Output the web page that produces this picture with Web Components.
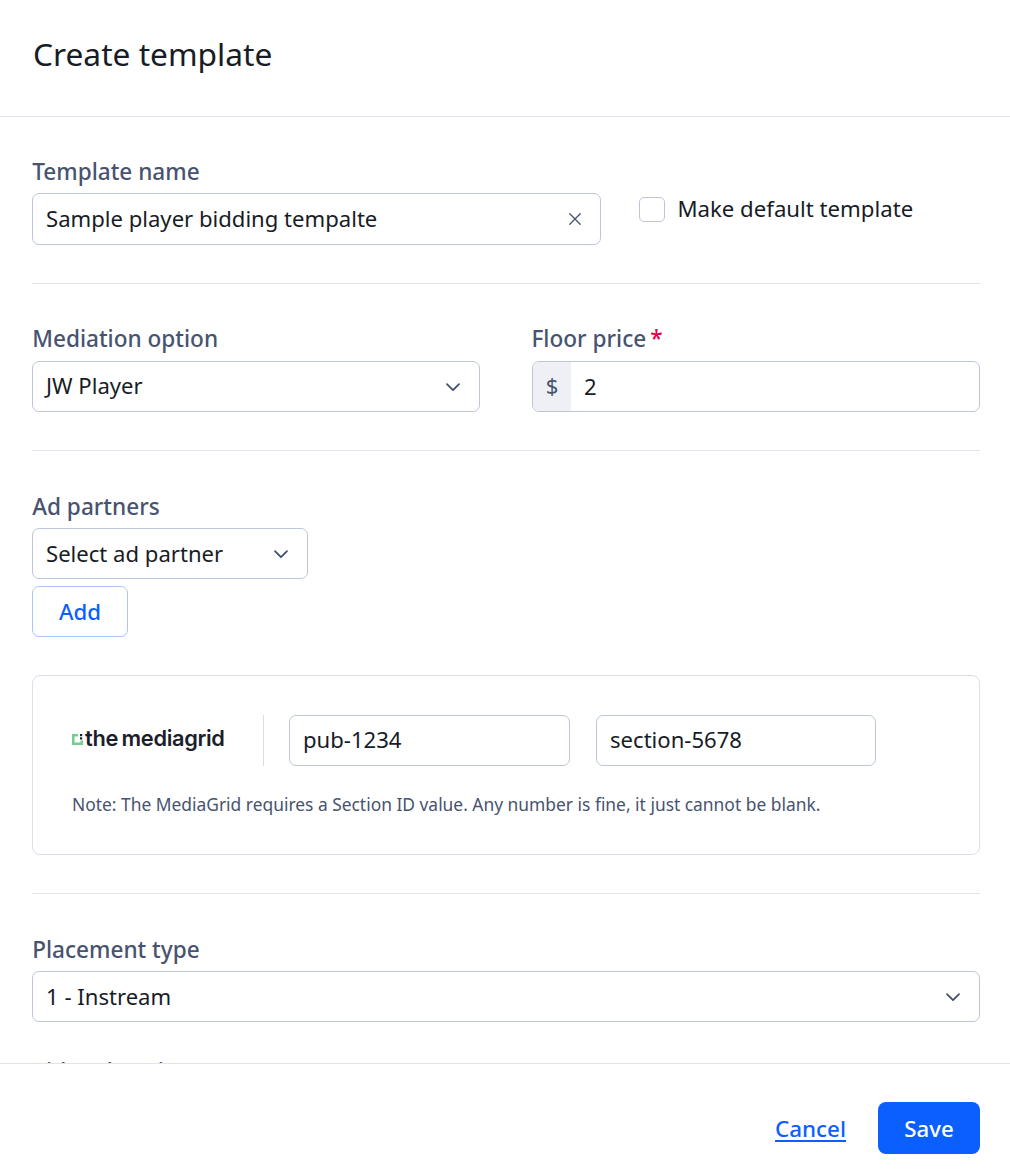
<!DOCTYPE html>
<html><head><meta charset="utf-8"><style>
html,body{margin:0;padding:0;background:#fff}
body{font-family:"Noto Sans",sans-serif}
</style></head><body>
<tpl-modal>
  <span slot="title">Create template</span>
  <form-section first>
    <div style="display:grid;grid-template-columns:569px 1fr;column-gap:38px">
      <form-field label="Template name"><text-box value="Sample player bidding tempalte" clear tall></text-box></form-field>
      <check-box style="margin-top:38px">Make default template</check-box>
    </div>
  </form-section>
  <form-section>
    <div style="display:grid;grid-template-columns:448px 448px;column-gap:52px;--lp:1px;--lm:6px">
      <form-field label="Mediation option"><select-box value="JW Player" up></select-box></form-field>
      <form-field label="Floor price" required style="--lx:-.8px"><text-box value="2" prefix="$"></text-box></form-field>
    </div>
  </form-section>
  <form-section>
    <form-field label="Ad partners">
      <select-box value="Select ad partner" style="width:276px"></select-box>
      <outline-button style="margin-top:7px">Add</outline-button>
    </form-field>
    <partner-card style="margin-top:38px"></partner-card>
  </form-section>
  <form-section last>
    <form-field label="Placement type"><select-box value="1 - Instream"></select-box></form-field>
    <form-field label="Video duration" style="margin-top:32px"><text-box value=""></text-box></form-field>
  </form-section>
  <a slot="cancel">Cancel</a>
  <span slot="save">Save</span>
</tpl-modal>
<script>
function def(name, css, html){
  customElements.define(name, class extends HTMLElement{
    connectedCallback(){
      if(this.shadowRoot) return;
      const r=this.attachShadow({mode:'open'});
      r.innerHTML='<style>'+css+'</style>'+(typeof html==='function'?html(this):html);
    }
  });
}
const chev='<svg width="16" height="16" viewBox="0 0 16 16" fill="none" stroke="#3f4d69" stroke-width="1.7" stroke-linecap="round" stroke-linejoin="round"><path d="M2 5.2 8 11.2 14 5.2"/></svg>';
def('tpl-modal',`
  :host{display:flex;flex-direction:column;width:1010px;height:1176px;overflow:hidden;background:#fff;color:#171c26}
  header{height:117px;box-sizing:border-box;border-bottom:1px solid #e1e4ec;padding:33px 33px 0;font-size:31.7px;line-height:42px;flex:none;color:#171c26}
  main{flex:1;min-height:0;overflow:hidden;padding:0 30px 0 32px;box-sizing:border-box}
  footer{flex:none;height:113px;box-sizing:border-box;border-top:1px solid #e1e4ec;display:flex;justify-content:flex-end;align-items:flex-start;gap:32px;padding:38px 30px 0 0}
  ::slotted(a){color:#0b5fff;text-decoration:underline;text-decoration-thickness:2px;text-underline-offset:3px;font-size:22.4px;font-weight:500;line-height:54px}
  .save{background:#0b5fff;color:#fff;border-radius:8px;height:52px;width:102px;display:flex;align-items:center;justify-content:center;font-size:22.2px;font-weight:500}
`,`<header><slot name="title"></slot></header><main><slot></slot></main><footer><slot name="cancel"></slot><div class="save"><slot name="save"></slot></div></footer>`);
def('form-section',`
  :host{display:block;padding:38px 0 38px;border-bottom:1px solid #e1e4ec}
  :host([first]){padding-top:37px}
  :host([last]){border-bottom:none}
`,`<slot></slot>`);
def('form-field',`
  :host{display:block}
  label{display:block;font-size:22.6px;font-weight:500;line-height:32px;color:#47536f;margin:0 0 var(--lm,5px) var(--lx,0);padding:var(--lp,2px) 0 0 .2px;white-space:nowrap}
  i{font-style:normal;color:#e6004c;margin-left:4px}
`,el=>`<label>${el.getAttribute('label')}${el.hasAttribute('required')?'<i>*</i>':''}</label><slot></slot>`);
def('text-box',`
  :host{display:flex;height:51px;box-sizing:border-box;border:1px solid #bcc5d9;border-radius:7px;align-items:center;font-size:22.1px;color:#171c26;background:#fff;overflow:hidden}
  :host([tall]){height:52px}
  .p{flex:none;width:38px;align-self:stretch;box-sizing:border-box;padding-bottom:3px;background:#eff0f5;color:#47536f;display:flex;align-items:center;justify-content:center}
  .v{flex:1;padding:0 13px 2px;white-space:nowrap}
  :host([up]) .v{padding-bottom:3px}
  svg{flex:none;margin-right:19px}
`,el=>`${el.getAttribute('prefix')?`<span class="p">${el.getAttribute('prefix')}</span>`:''}<span class="v">${el.getAttribute('value')||''}</span>${el.hasAttribute('clear')?'<svg width="12" height="12" viewBox="0 0 12 12" fill="none" stroke="#47536f" stroke-width="1.3" stroke-linecap="round"><path d="M.8.8 11.200 11.200M11.200.8.8 11.200"/></svg>':''}`);
def('select-box',`
  :host{display:flex;height:51px;box-sizing:border-box;border:1px solid #bcc5d9;border-radius:7px;align-items:center;justify-content:space-between;font-size:22.1px;color:#171c26;background:#fff;padding:0 18px 0 13px}
  span{white-space:nowrap;padding-bottom:2px}
  :host([up]) span{padding-bottom:3px}
`,el=>`<span>${el.getAttribute('value')}</span>${chev}`);
def('check-box',`
  :host{display:flex;align-items:center;gap:12.4px;font-size:22.2px;color:#171c26;height:32px}
  b{display:block;width:26px;height:25px;margin-top:2px;box-sizing:border-box;border:1px solid #bcc5d9;border-radius:5px;flex:none}
`,`<b></b><slot></slot>`);
def('outline-button',`
  :host{display:flex;width:96px;height:51px;box-sizing:border-box;border:1px solid #a9c6fb;border-radius:7px;align-items:center;justify-content:center;color:#0b5fff;font-size:22.2px;font-weight:500}
`,`<slot></slot>`);
def('media-logo',`
  :host{display:inline-flex;align-items:center;gap:2px;font-family:Inter,sans-serif;font-size:21.8px;font-weight:600;letter-spacing:-.35px;word-spacing:-1.5px;color:#1c1e2b;line-height:1;padding-bottom:4px}
  svg{flex:none;margin-top:3px}
`,`<svg width="11" height="11" viewBox="0 0 11 11"><path fill="#72d08f" d="M0 0H6V2.500H2.500V8.500H8.500V6.500H11V11H0Z"/><rect x="8" y="0" width="2.200" height="2.200" fill="#1c1e2b"/><rect x="8" y="3.300" width="2.200" height="2.200" fill="#1c1e2b"/></svg><span>the mediagrid</span>`);
def('partner-card',`
  :host{display:block;border:1px solid #dadfea;border-radius:8px;height:180px;box-sizing:border-box;padding:39px 39px 0 39px}
  .row{display:flex;align-items:center;height:51px}
  .logo{width:192px;height:51px;box-sizing:border-box;border-right:1px solid #d9dde8;display:flex;align-items:center}
  text-box{width:281px;margin-left:25px}
  text-box + text-box{width:280px;margin-left:26px}
  p{margin:26px 0 0;font-size:17.4px;line-height:24px;color:#47536f;white-space:nowrap}
`,`<div class="row"><div class="logo"><media-logo></media-logo></div><text-box value="pub-1234" up></text-box><text-box value="section-5678" up></text-box></div><p>Note: The MediaGrid requires a Section ID value. Any number is fine, it just cannot be blank.</p>`);
</script>
</body></html>
